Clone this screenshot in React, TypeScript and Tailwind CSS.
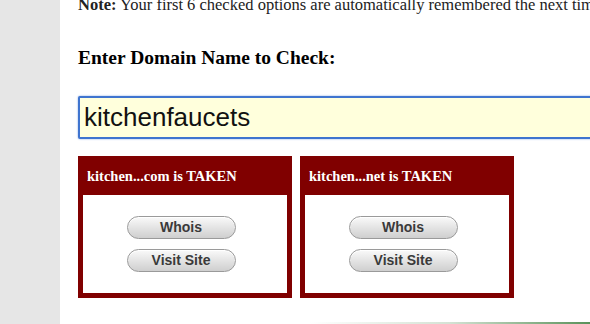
import React from 'react';

const serif = { fontFamily: '"Liberation Serif", "Times New Roman", serif' };
const sans = { fontFamily: '"Liberation Sans", Arial, Helvetica, sans-serif' };

function PillButton({ label }: { label: string }) {
  return (
    <button
      className="h-[23px] w-[109px] rounded-full border border-[#9a9a9a] bg-gradient-to-b from-[#fafafa] via-[#e4e4e4] to-[#cfcfcf] text-[14px] font-bold text-[#3a3a3a] shadow-[inset_0_1px_0_#fff]"
      style={sans}
    >
      {label}
    </button>
  );
}

function ResultBox({ name, tld }: { name: string; tld: string }) {
  return (
    <div className="flex h-[142px] w-[214px] flex-col bg-[#800000] px-[5px] pb-[5px]">
      <div className="flex h-[39px] items-center px-[4px] pt-[3px] text-[14.5px] font-bold text-white" style={serif}>
        {name}...{tld} is TAKEN
      </div>
      <div className="flex flex-1 flex-col items-center gap-[10px] bg-white pt-[21px] pr-[8px]">
        <PillButton label="Whois" />
        <PillButton label="Visit Site" />
      </div>
    </div>
  );
}

export default function App() {
  return (
    <div className="flex h-[324px] w-[590px] overflow-hidden bg-white">
      <div className="w-[60px] shrink-0 bg-[#e6e6e6]" />
      <div className="relative flex min-w-0 flex-1 flex-col pl-[18px]">
        <p className="mt-[-7px] whitespace-nowrap text-[16.5px] text-[#222]" style={serif}>
          <b>Note:</b> Your first 6 checked options are automatically remembered the next time
        </p>
        <h2 className="mt-[25px] whitespace-nowrap text-[19.5px] font-bold text-black" style={serif}>
          Enter Domain Name to Check:
        </h2>
        <div className="mt-[24px] flex h-[43px] w-[540px] items-center rounded-[2px] border-2 border-[#3f74cf] bg-[#ffffdc] pl-[4px] shadow-[0_0_2px_#7aa0e0]">
          <span className="text-[26px] text-[#111]" style={sans}>kitchenfaucets</span>
        </div>
        <div className="mt-[17px] flex gap-[8px]">
          <ResultBox name="kitchen" tld="com" />
          <ResultBox name="kitchen" tld="net" />
        </div>
        <div className="absolute bottom-0 left-[250px] right-0 h-[2px] bg-gradient-to-r from-white via-[#d4e2d4] to-[#5a915a]" />
      </div>
    </div>
  );
}
